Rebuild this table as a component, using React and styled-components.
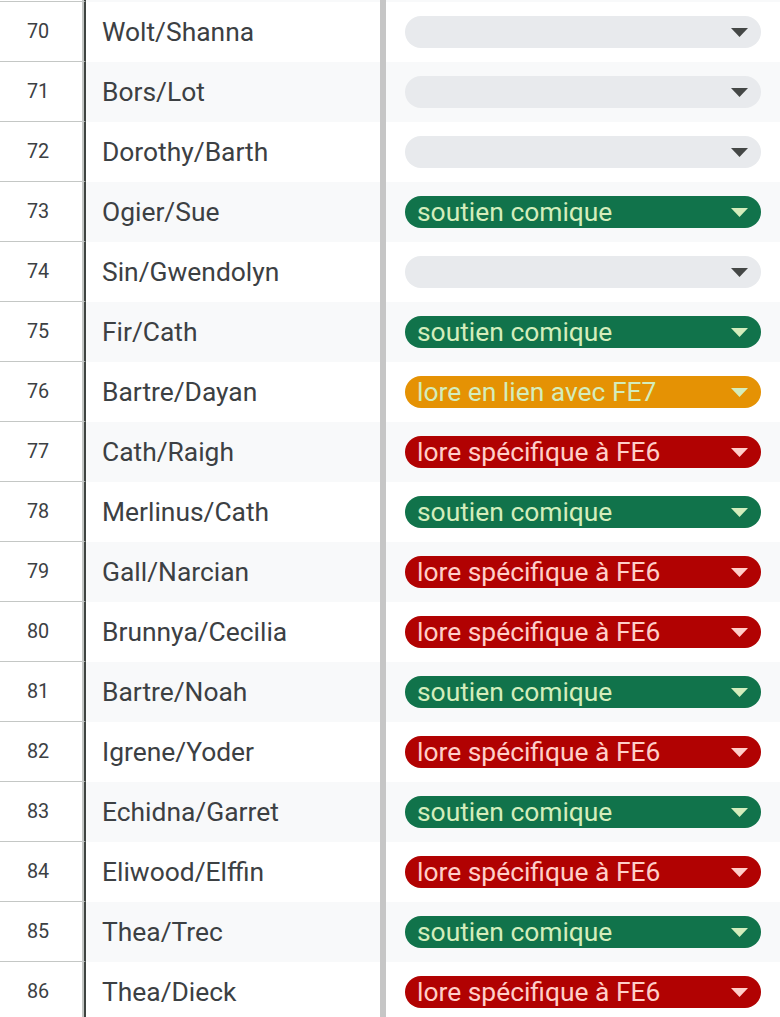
import React from 'react';
import styled, { createGlobalStyle } from 'styled-components';

const GlobalStyle = createGlobalStyle`
  html, body {
    margin: 0;
    padding: 0;
    background: #ffffff;
    overflow: hidden;
  }
  body {
    font-family: Roboto, "Liberation Sans", Arial, sans-serif;
  }
`;

const chipColors = {
  none: { bg: '#e8eaed', fg: '#444746' },
  green: { bg: '#11734b', fg: '#d4edbc' },
  orange: { bg: '#e59204', fg: '#d4edbc' },
  red: { bg: '#b10202', fg: '#ffcfc9' },
};

const Sheet = styled.div`
  width: 780px;
  margin-top: -58px;
`;

const Row = styled.div`
  display: flex;
  height: 60px;
  background: ${(props) => (props.banded ? '#f8f9fa' : '#ffffff')};
`;

const NumCell = styled.div`
  width: 86px;
  flex-shrink: 0;
  box-sizing: border-box;
  display: flex;
  align-items: center;
  justify-content: center;
  padding-right: 8px;
  background: #ffffff;
  border-bottom: 1px solid #c4c7c5;
  border-right: 2px solid #3f4441;
  box-shadow: inset -2px 0 0 #c4c7c5;
  color: #3c4043;
  font-size: 19.8px;
`;

const NameCell = styled.div`
  width: 300px;
  flex-shrink: 0;
  box-sizing: border-box;
  display: flex;
  align-items: center;
  padding: 0 0 1px 16px;
  border-right: 6px solid #c6c6c6;
  color: #3c4043;
  font-size: 26.4px;
  white-space: nowrap;
`;

const ChipCell = styled.div`
  flex: 1;
  display: flex;
  align-items: center;
  padding: 0 19px 1px 19px;
`;

const Chip = styled.div`
  flex: 1;
  height: 32px;
  border-radius: 16px;
  display: flex;
  align-items: center;
  justify-content: space-between;
  padding: 0 13px 0 12px;
  background: ${(props) => chipColors[props.kind].bg};
  color: ${(props) => chipColors[props.kind].fg};
  font-size: 26.4px;
  line-height: 32px;
  white-space: nowrap;
`;

const Arrow = styled.svg`
  width: 17px;
  height: 9px;
  flex-shrink: 0;
  margin-top: 1px;
`;

const rows = [
  [69, '', 'none'],
  [70, 'Wolt/Shanna', 'none'],
  [71, 'Bors/Lot', 'none'],
  [72, 'Dorothy/Barth', 'none'],
  [73, 'Ogier/Sue', 'green'],
  [74, 'Sin/Gwendolyn', 'none'],
  [75, 'Fir/Cath', 'green'],
  [76, 'Bartre/Dayan', 'orange'],
  [77, 'Cath/Raigh', 'red'],
  [78, 'Merlinus/Cath', 'green'],
  [79, 'Gall/Narcian', 'red'],
  [80, 'Brunnya/Cecilia', 'red'],
  [81, 'Bartre/Noah', 'green'],
  [82, 'Igrene/Yoder', 'red'],
  [83, 'Echidna/Garret', 'green'],
  [84, 'Eliwood/Elffin', 'red'],
  [85, 'Thea/Trec', 'green'],
  [86, 'Thea/Dieck', 'red'],
];

const labels = {
  none: '',
  green: 'soutien comique',
  orange: 'lore en lien avec FE7',
  red: 'lore spécifique à FE6',
};

const App = () => {
  return (
    <>
      <GlobalStyle />
      <Sheet>
        {rows.map(([n, name, kind]) => (
          <Row key={n} banded={n % 2 === 1}>
            <NumCell>{n === 69 ? '' : n}</NumCell>
            <NameCell>{name}</NameCell>
            <ChipCell>
              <Chip kind={kind}>
                <span>{labels[kind]}</span>
                <Arrow viewBox="0 0 17 9">
                  <path d="M0 0 L17 0 L8.5 9 Z" fill={chipColors[kind].fg} />
                </Arrow>
              </Chip>
            </ChipCell>
          </Row>
        ))}
      </Sheet>
    </>
  );
};

export default App;
